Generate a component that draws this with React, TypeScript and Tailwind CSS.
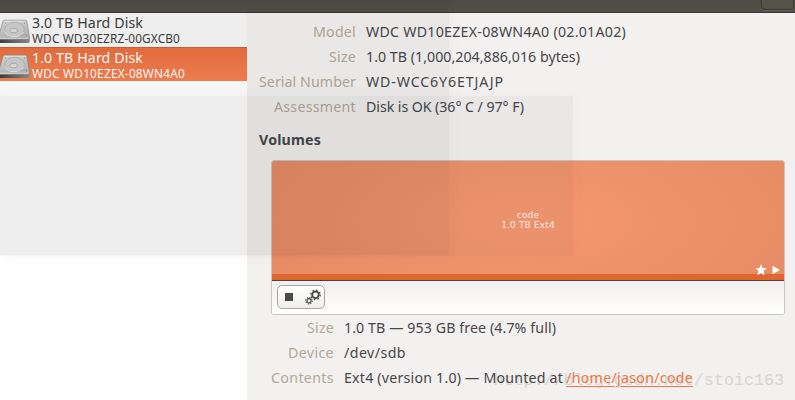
import type { ReactNode } from "react";

function DriveIcon() {
  return (
    <svg width="30" height="25" viewBox="0 0 30 25" className="mt-[3px] block shrink-0">
      <defs>
        <linearGradient id="lid" x1="0" y1="0" x2="0.3" y2="1">
          <stop offset="0" stopColor="#dcdcdc" />
          <stop offset="1" stopColor="#b9b9b9" />
        </linearGradient>
        <linearGradient id="front" x1="0" y1="0" x2="1" y2="0">
          <stop offset="0" stopColor="#3c3c3c" />
          <stop offset="0.5" stopColor="#666" />
          <stop offset="1" stopColor="#8c8c8c" />
        </linearGradient>
      </defs>
      <path d="M-1 18.5H29.7V22Q29.7 24 28 24H-1Z" fill="url(#front)" />
      <path d="M3 2.2Q3.300 1.200 4.500 1.200H25.500Q26.500 1.200 26.800 2.200L29.600 18.500Q29.500 20.300 28 20.300H-1V16Z" fill="url(#lid)" stroke="#8b8b8b" strokeWidth="0.7" />
      <path d="M4.500 2.200H25.500" stroke="#f3f3f3" strokeWidth="0.8" />
      <path d="M0 19.300H28.500" stroke="#e6e6e6" strokeWidth="0.8" />
      <ellipse cx="14.500" cy="10.500" rx="9.800" ry="7.200" fill="#cecece" stroke="#aaa" strokeWidth="0.7" />
      <path d="M5 12.500Q7 17.500 14 17.700Q21 17.500 23.800 13" fill="none" stroke="#ececec" strokeWidth="0.9" />
      <ellipse cx="13.700" cy="11.500" rx="3.900" ry="2.300" fill="#dedede" stroke="#999" strokeWidth="0.7" />
      <path d="M20 16.500L25.500 15.500" stroke="#aaa" strokeWidth="0.8" />
      <circle cx="5.500" cy="4" r="0.6" fill="#888" />
      <circle cx="24.500" cy="4" r="0.6" fill="#888" />
      <circle cx="26.500" cy="16.800" r="0.7" fill="#888" />
    </svg>
  );
}

function Gears() {
  return (
    <svg width="17" height="16" viewBox="0 0 17 16" fill="none" stroke="#4a4a4a">
      <circle cx="10.500" cy="5.800" r="3.300" strokeWidth="1.800" />
      <circle cx="10.500" cy="5.800" r="4.700" strokeWidth="1.500" strokeDasharray="1.480 2.211" />
      <circle cx="4" cy="11.800" r="2.100" strokeWidth="1.200" />
      <circle cx="4" cy="11.800" r="3.200" strokeWidth="1.100" strokeDasharray="1.100 1.413" />
    </svg>
  );
}

function DriveRow({ title, model, modelClass, className }: { title: string; model: string; modelClass: string; className: string }) {
  return (
    <div className={`flex h-[34px] items-center ${className}`}>
      <DriveIcon />
      <div className="ml-[2px] whitespace-nowrap">
        <div className="text-[14.2px] leading-[16px] tracking-[0.1px]">{title}</div>
        <div className={`text-[11.8px] leading-[14px] ${modelClass}`}>{model}</div>
      </div>
    </div>
  );
}

function Row({ label, labelClass, labelWidth, valueClass, children }: { label: string; labelClass: string; labelWidth: string; valueClass: string; children: ReactNode }) {
  return (
    <div className="flex h-[25px] items-center whitespace-nowrap">
      <div className={`shrink-0 text-right text-[#b3a799] ${labelWidth} ${labelClass}`}>{label}</div>
      <div className={`ml-[10px] ${valueClass}`}>{children}</div>
    </div>
  );
}

export default function App() {
  return (
    <div className="relative flex h-[400px] w-[795px] flex-col overflow-hidden bg-white font-['Noto_Sans',sans-serif] text-[14.2px] leading-[20px] text-[#46464a]">
      <header className="flex h-[13px] shrink-0 justify-end border-b border-[#3a3934] bg-linear-to-b from-[#4c4b45] to-[#524f47]">
        <div className="mr-[1px] h-[10px] w-[33px] rounded-b-[4px] border border-t-0 border-[#383732] bg-[#55534b] shadow-[0_1px_0_#66645c]" />
      </header>

      <div className="flex min-h-0 flex-1">
        <aside className="w-[247px] shrink-0 bg-white">
          <DriveRow title="3.0 TB Hard Disk" model="WDC WD30EZRZ-00GXCB0" modelClass="tracking-[0.15px]" className="bg-[#f7f7f7] text-[#3c3c3c]" />
          <DriveRow title="1.0 TB Hard Disk" model="WDC WD10EZEX-08WN4A0" modelClass="tracking-[0.24px]" className="border-t border-[#d1603a] bg-linear-to-b from-[#ea6f3d] to-[#f48152] text-white" />
        </aside>

        <main className="relative isolate flex flex-1 flex-col bg-[#f2f1ef] pt-[6px]">
          <Row label="Model" labelClass="tracking-[0.23px]" labelWidth="w-[109px]" valueClass="tracking-[0.26px]">WDC WD10EZEX-08WN4A0 (02.01A02)</Row>
          <Row label="Size" labelClass="tracking-[0.22px]" labelWidth="w-[109px]" valueClass="tracking-[0.03px]">1.0 TB (1,000,204,886,016 bytes)</Row>
          <Row label="Serial Number" labelClass="tracking-[0.08px]" labelWidth="w-[109px]" valueClass="tracking-[0.87px]">WD-WCC6Y6ETJAJP</Row>
          <Row label="Assessment" labelClass="tracking-[0.26px]" labelWidth="w-[109px]" valueClass="tracking-[-0.06px]">Disk is OK (36° C / 97° F)</Row>

          <h2 className="mt-[11px] ml-[12px] font-bold tracking-[0.19px]">Volumes</h2>

          <section className="mt-[10px] ml-[24px] flex h-[155px] w-[514px] shrink-0 flex-col overflow-hidden rounded-[3px] border border-[#c9c6c2]">
            <div className="flex h-[120px] shrink-0 flex-col border-b border-[#4a4441] bg-[radial-gradient(ellipse_72%_130%_at_50%_50%,#f59871,#e38861)]">
              <div className="flex flex-1 flex-col items-center justify-end pb-[44px] font-['DejaVu_Sans',sans-serif] text-[9px] leading-[10px] tracking-[0.15px] text-[#fff2ec]">
                <span>code</span>
                <span>1.0 TB Ext4</span>
              </div>
              <div className="z-10 -mt-[10px] flex h-[10px] items-start justify-end gap-[5px] pr-[4px]">
                <svg width="12" height="12" viewBox="0 0 12 12" fill="white"><path d="M6 .3L7.600 4L11.600 4.300L8.600 7L9.500 11.200L6 9L2.500 11.200L3.400 7L.4 4.300L4.400 4Z" /></svg>
                <svg width="8" height="12" viewBox="0 0 8 12" fill="white"><path d="M.5 1.800L7.800 6L.5 10.200Z" /></svg>
              </div>
              <div className="h-[6px] shrink-0 bg-[#df6531]" />
            </div>
            <div className="flex-1 bg-linear-to-b from-[#f0efed] to-white pt-[4px] pl-[5px]">
              <div className="flex h-[24px] w-[48px] items-center rounded-[5px] border border-[#a9a6a2] bg-linear-to-b from-white to-[#efeeec]">
                <div className="ml-[7px] size-[8px] bg-[#4a4a4a]" />
                <div className="ml-[12px]"><Gears /></div>
              </div>
            </div>
          </section>

          <Row label="Size" labelClass="tracking-[0.22px]" labelWidth="w-[87px]" valueClass="tracking-[0.1px]">1.0 TB — 953 GB free (4.7% full)</Row>
          <Row label="Device" labelClass="tracking-[0.37px]" labelWidth="w-[87px]" valueClass="tracking-[0.44px]">/dev/sdb</Row>
          <Row label="Contents" labelClass="tracking-[0.36px]" labelWidth="w-[87px]" valueClass="flex gap-[3px] tracking-[0.21px]">
            <span>Ext4 (version 1.0) — Mounted at</span>
            <a className="tracking-[0.29px] text-[#f07746] underline decoration-1 underline-offset-3">/home/jason/code</a>
          </Row>

          <div className="pointer-events-none absolute right-[11px] bottom-[9px] -z-10 font-['Liberation_Mono',monospace] text-[16.7px] whitespace-nowrap text-[#d6d5d1]">http://blog.csdn.net/stoic163</div>
        </main>
      </div>

      <div className="pointer-events-none absolute top-0 left-0 h-[255px] w-[449px] bg-[#181812]/4 shadow-[0_0_20px_rgba(0,0,0,0.02)]" />
      <div className="pointer-events-none absolute top-[96px] left-0 h-[160px] w-[573px] bg-[#181812]/4 shadow-[0_0_20px_rgba(0,0,0,0.02)]" />
    </div>
  );
}
